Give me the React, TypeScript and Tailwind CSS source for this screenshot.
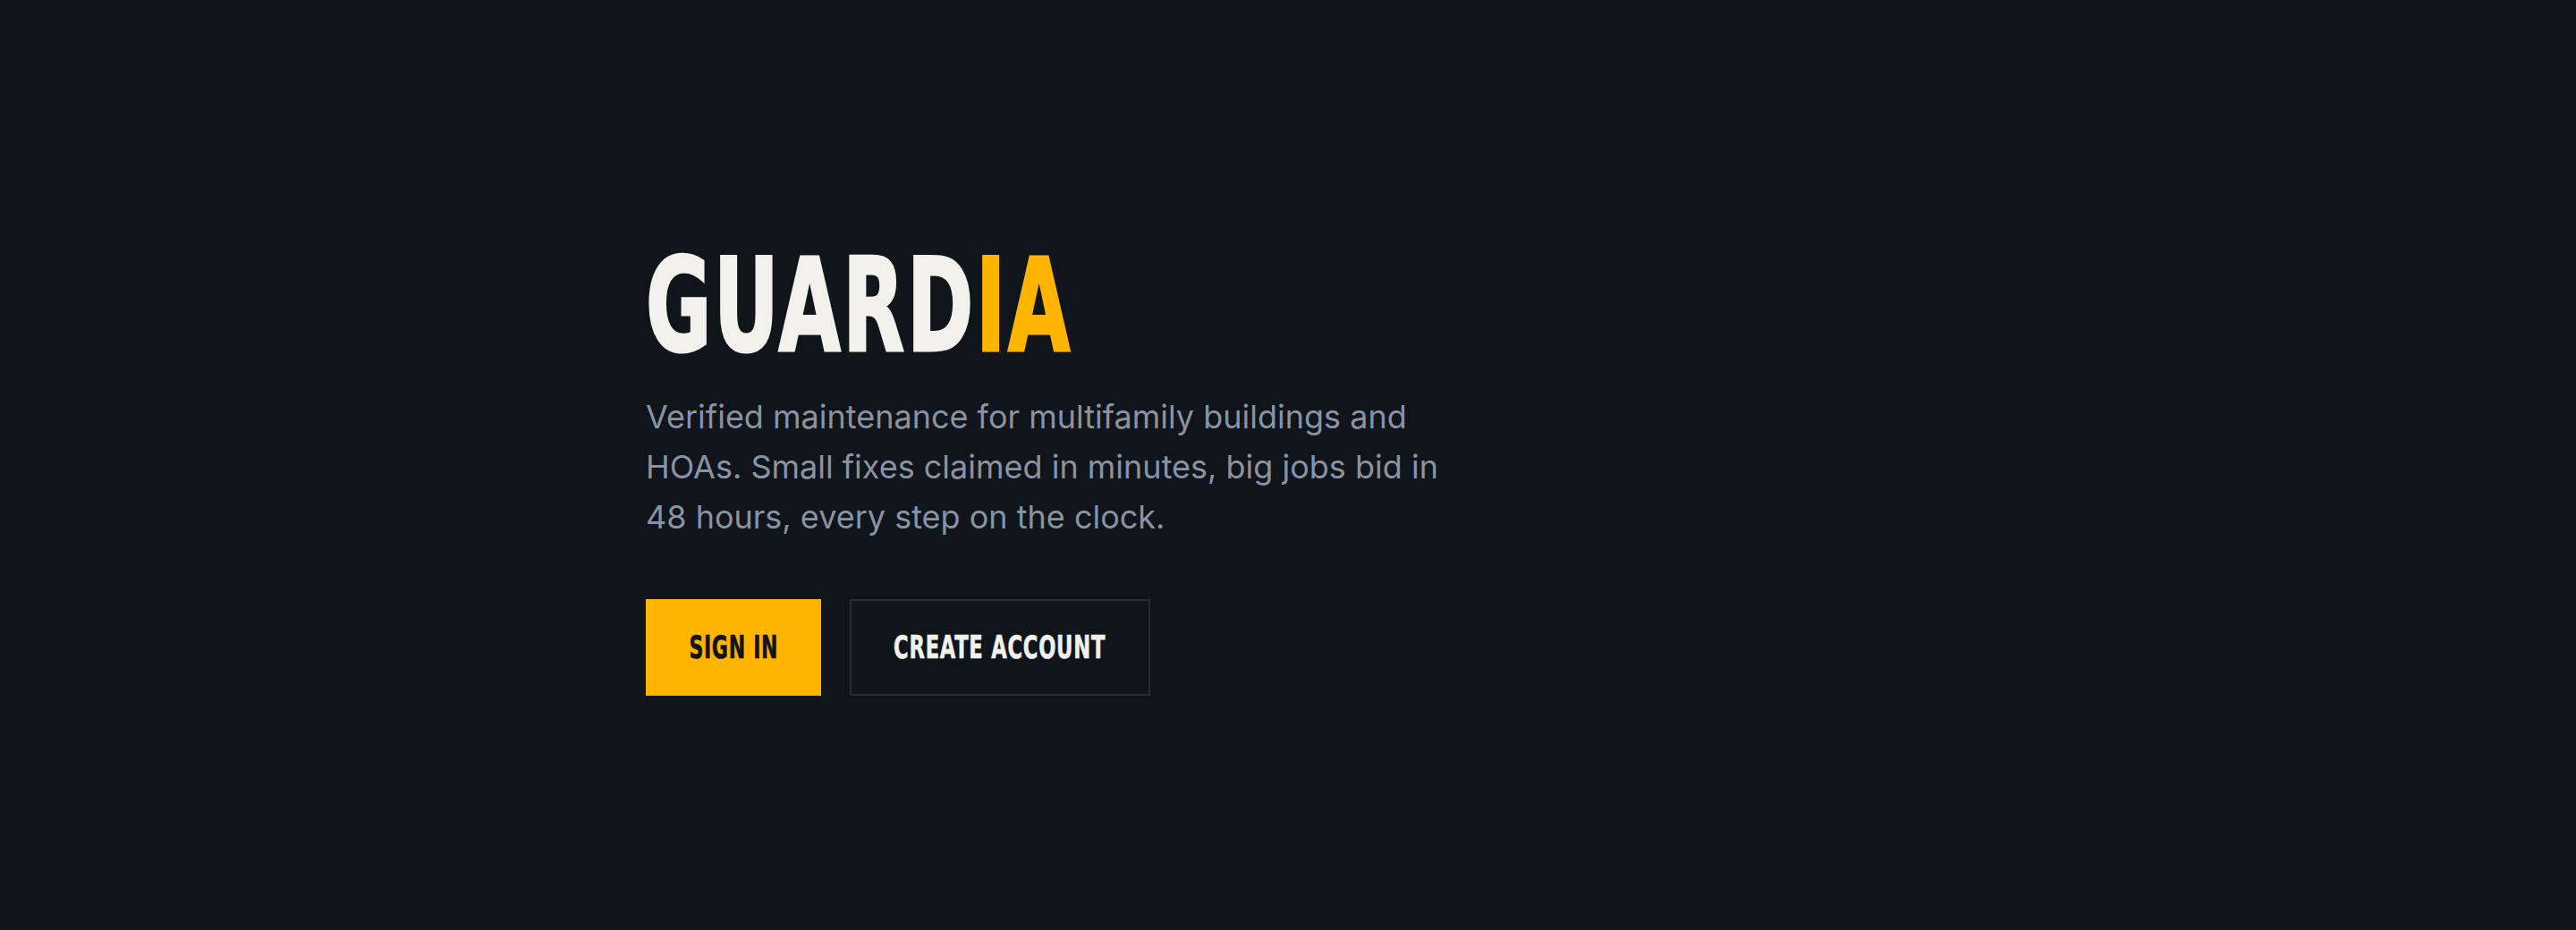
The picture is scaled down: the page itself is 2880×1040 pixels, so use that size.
export default function App() {
  return (
    <div className="h-[1040px] w-full bg-[#10141b] flex flex-col">
      <div className="mx-auto w-[1436px] pt-[270px]">
        {/* Wordmark */}
        <h1 className="font-['Liberation_Sans_Narrow','DejaVu_Sans_Condensed',sans-serif] font-bold text-[144px] leading-none whitespace-nowrap [-webkit-text-stroke:3px_currentColor]">
          <span className="inline-block origin-left scale-x-[0.69] tracking-[4px]">
            <span className="text-[#f1f0eb]">GUARD</span>
            <span className="text-[#ffb400]">IA</span>
          </span>
        </h1>

        <p className="mt-[24px] max-w-[905px] font-['Inter',sans-serif] text-[36px] leading-[56px] text-[#8a93a3]">
          Verified maintenance for multifamily buildings and HOAs. Small fixes claimed in minutes, big jobs bid in 48 hours, every step on the clock.
        </p>

        {/* Actions */}
        <div className="mt-[64px] flex gap-[32px] font-['Liberation_Sans_Narrow','DejaVu_Sans_Condensed',sans-serif] font-bold text-[35px] leading-none [-webkit-text-stroke:0.6px_currentColor]">
          <button className="w-[196px] h-[108px] bg-[#ffb400] text-[#10141b] flex items-center justify-center">
            <span className="inline-block scale-x-[0.7] tracking-[1px] whitespace-nowrap">SIGN IN</span>
          </button>
          <button className="w-[336px] h-[108px] border-2 border-[#262d38] text-[#f1f0eb] flex items-center justify-center">
            <span className="inline-block scale-x-[0.72] tracking-[1px] whitespace-nowrap">CREATE ACCOUNT</span>
          </button>
        </div>
      </div>
    </div>
  )
}
